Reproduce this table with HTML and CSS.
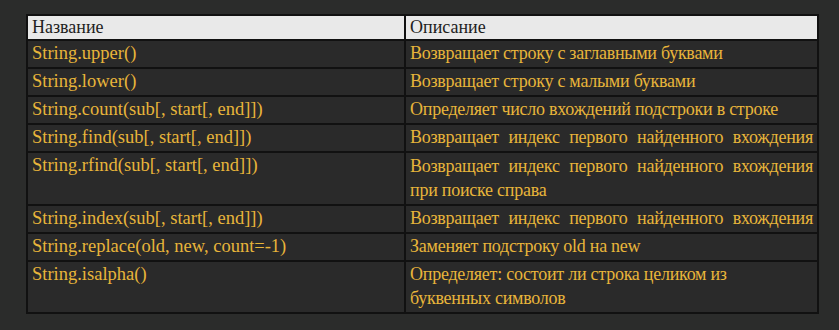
FILE: index.html
```html
<!DOCTYPE html>
<html lang="ru">
<head>
<meta charset="utf-8">
<link rel="stylesheet" href="styles.css">
</head>
<body>
<div class="wrap">
<table class="methods">
  <thead>
    <tr><th class="c1">Название</th><th class="c2">Описание</th></tr>
  </thead>
  <tbody>
    <tr><td>String.upper()</td><td>Возвращает строку с заглавными буквами</td></tr>
    <tr><td>String.lower()</td><td>Возвращает строку с малыми буквами</td></tr>
    <tr><td>String.count(sub[, start[, end]])</td><td>Определяет число вхождений подстроки в строке</td></tr>
    <tr><td>String.find(sub[, start[, end]])</td><td class="just">Возвращает индекс первого найденного вхождения</td></tr>
    <tr><td>String.rfind(sub[, start[, end]])</td><td class="just2">Возвращает индекс первого найденного вхождения при поиске справа</td></tr>
    <tr><td>String.index(sub[, start[, end]])</td><td class="just">Возвращает индекс первого найденного вхождения</td></tr>
    <tr><td>String.replace(old, new, count=-1)</td><td>Заменяет подстроку old на new</td></tr>
    <tr><td>String.isalpha()</td><td class="narrow">Определяет: состоит ли строка целиком из буквенных символов</td></tr>
  </tbody>
</table>
</div>
</body>
</html>
```
FILE: styles.css
```css
html, body {
  margin: 0;
  padding: 0;
  background: #2b2c2b;
}
.wrap {
  padding: 14px 0 0 26px;
}
.methods {
  border-collapse: collapse;
  width: 793px;
  table-layout: fixed;
  font-family: "Liberation Serif", "Times New Roman", serif;
  font-size: 18px;
  line-height: 23px;
  color: #e8b53a;
  background: #2a2a2a;
}
.methods th, .methods td {
  border: 2px solid #111111;
  padding: 1px 4px 2px 4px;
  text-align: left;
  vertical-align: top;
  font-weight: normal;
}
.methods td:first-child {
  font-size: 18.5px;
}
.methods td:last-child {
  letter-spacing: -0.25px;
}
.methods th {
  background: #e9e9e9;
  color: #1e1e1e;
  padding-top: 0;
  padding-bottom: 0;
}
.methods .c1 {
  width: 368px;
}
.methods td.just {
  text-align: justify;
  text-align-last: justify;
}
.methods td.just2 {
  text-align: justify;
  line-height: 24px;
}
.methods td.narrow {
  padding-right: 80px;
  line-height: 23.5px;
}
```
